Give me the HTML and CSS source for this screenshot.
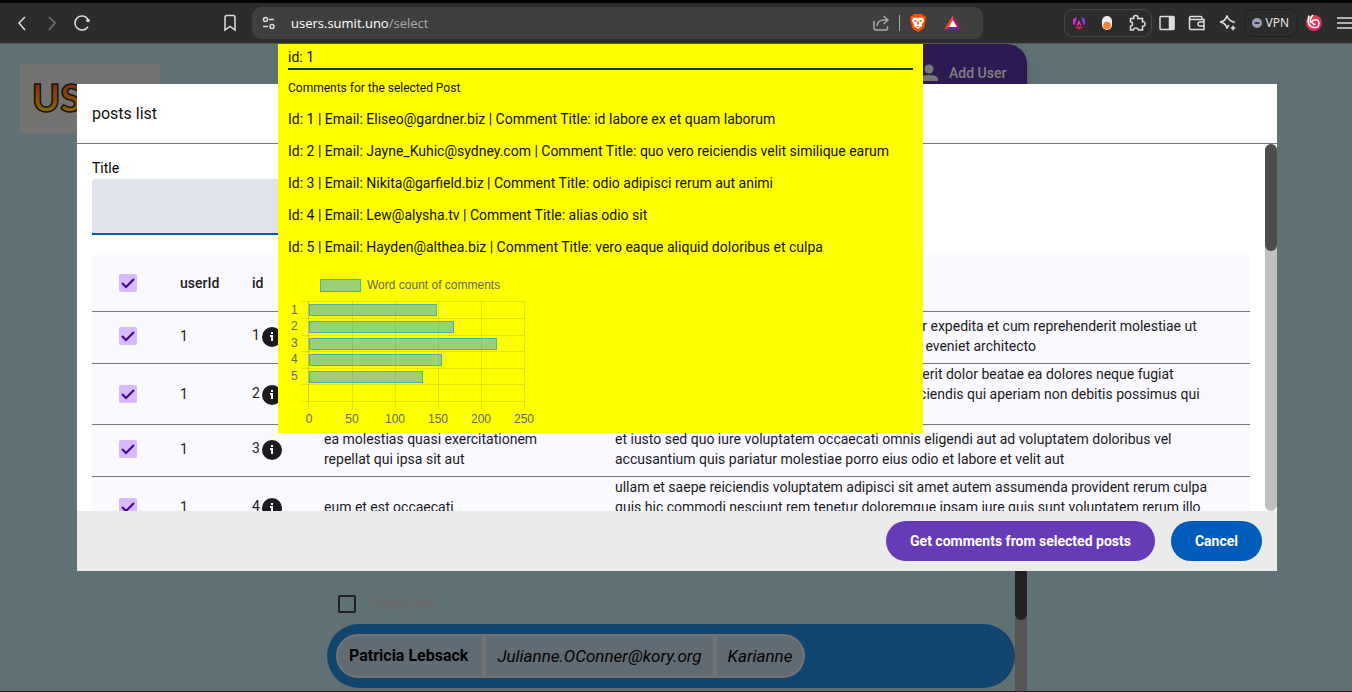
FILE: index.html
```
<!DOCTYPE html>
<html lang="en">
<head>
<meta charset="utf-8">
<title>Users</title>
<link rel="stylesheet" href="styles.css">
</head>
<body>
<header class="toolbar">
  <nav class="nav-buttons">
    <button class="tool" aria-label="Back"><svg width="18" height="18" viewBox="0 0 18 18"><path d="M12 3 6 9l6 7"/></svg></button>
    <button class="tool tool-dim" aria-label="Forward"><svg width="18" height="18" viewBox="0 0 18 18"><path d="m6 3 6 6-6 7"/></svg></button>
    <button class="tool" aria-label="Reload"><svg width="18" height="18" viewBox="0 0 18 18"><path d="M15 12.500A7 7 0 1 1 15 5.500"/><circle cx="15" cy="6.500" r="1.800" fill="#ddd" stroke="none"/></svg></button>
  </nav>
  <button class="tool bookmark" aria-label="Bookmark"><svg width="18" height="18" viewBox="0 0 18 18"><path d="M4 3.500Q4 1.500 6 1.500h6q2 0 2 2v12.500l-5-3.500-5 3.500z"/></svg></button>
  <div class="address">
    <svg class="icon" width="14" height="14" viewBox="0 0 14 14"><circle cx="3.500" cy="3.500" r="2"/><path d="M7 3.500h5M1 10.500h5"/><circle cx="10" cy="10.500" r="2"/></svg>
    <span class="url">users.sumit.uno<span class="url-path">/select</span></span>
    <button class="tool share" aria-label="Share"><svg width="18" height="18" viewBox="0 0 18 18"><path d="M2 7v7q0 2 2 2h10q1.500 0 1.500-1.500V12M5 12q.500-6 7-6h4M11.500 2l4.500 4-4.500 4"/></svg></button>
    <span class="separator"></span>
    <svg width="18" height="20" viewBox="0 0 18 20"><path fill="#ff5000" d="M5 1h8l1.500 1.500L17 4l-.5 3L15 15l-6 4-6-4L1.500 7 1 4l2.500-1.500z"/><path fill="#fff" d="m4 5 3-.500 2 .500 2-.500 3 .500 1 3-2 3v2l-4 3-4-3v-2L3 8z"/><path fill="#ff5000" d="m5 7 2.500.500v1L6 9zM13 7l-2.500.500v1L12 9zM8.500 8h1l.5 3-1 1-1-1zM7 13h4l-2 1z"/></svg>
    <svg class="rewards" width="18" height="18" viewBox="0 0 18 18"><path fill="#ff4724" d="M9 1v6l-4 7-5 2z"/><path fill="#9e1f63" d="M9 1v6l4 7 5 2z"/><path fill="#662d91" d="m0 16 5-3h8l5 3z"/><path fill="#fff" d="m9 6 4 7H5z"/></svg>
  </div>
  <div class="extensions">
    <svg width="14" height="14" viewBox="0 0 14 14"><path fill="#d52fd0" d="M1 3 5 1 2.500 9.500 1 8z"/><path fill="#8a35f2" d="M9 1l4 2v5l-1.500 1.500z"/><path fill="#e83bc8" d="m7 4 2.500 5.500H8.200L7.800 8.500H6.200l-.4 1H4.500z"/><path fill="#f01456" d="M4 10.500h6l.5 1L7 13.500l-3.500-2z"/></svg>
    <svg width="10" height="14" viewBox="0 0 10 14"><rect width="10" height="14" rx="5" fill="#eee"/><circle cx="5" cy="9.500" r="3.800" fill="#f58233"/></svg>
    <svg class="icon" width="18" height="18" viewBox="0 0 18 18"><path d="M2.500 4.500h3.300Q5 1.500 7.800 1.500T9.800 4.500h4.700v3.300q2.500-.3 2.500 2.200t-2.500 2.200V16h-4.200q-.3-2-2.500-2T5.500 16h-3v-3.800q2-.2 2-2.200t-2-2.200z"/></svg>
  </div>
  <button class="tool" aria-label="Side panel"><svg width="16" height="16" viewBox="0 0 16 16"><rect x="1" y="1.500" width="14" height="13" rx="1"/><path fill="#ddd" d="M10.500 2h4v12h-4z"/></svg></button>
  <button class="tool" aria-label="Wallet"><svg width="18" height="16" viewBox="0 0 18 16"><path d="M14 4.500V3q0-1.500-1.500-1.500H3Q1.500 1.500 1.500 3v10q0 1.500 1.500 1.500h13V4.500H2M16 7h-4q-2 0-2 2t2 2h4"/></svg></button>
  <button class="tool" aria-label="Assistant"><svg width="18" height="18" viewBox="0 0 18 18"><path d="M14.500 9Q15 8.500 15 8q-5.500-1-7-6.500Q7 7 1 8q6 1 7 6.500 .5-2 2-3.500"/><path d="M14 11q.5 2.500 3 3-2.500.500-3 3-.5-2.500-3-3 2.500-.500 3-3z" fill="#ddd" stroke="none"/></svg></button>
  <button class="vpn"><span class="vpn-dot"></span>VPN</button>
  <svg width="18" height="18" viewBox="0 0 18 18"><defs><linearGradient id="swirl" x2="1" y2="1"><stop stop-color="#f04b3c"/><stop offset="1" stop-color="#d51c78"/></linearGradient></defs><circle cx="9" cy="9" r="8" fill="url(#swirl)"/><path d="M4 1.500Q1 12 9 13.500q5 .5 5-4T9.500 6 8 9.500q1 1.500 2.500.500M8 1Q4 5 6 9" fill="none" stroke="#fff" stroke-width="1.500"/></svg>
  <button class="tool menu" aria-label="Menu"><svg width="16" height="14" viewBox="0 0 16 14"><path d="M1 2h15M1 7h15M1 12h15"/></svg></button>
</header>

<main class="page">
  <div class="app">
    <div class="logo">
      <svg width="140" height="69" viewBox="0 0 140 69"><defs><linearGradient id="flame" x2="0" y2="1"><stop offset=".2" stop-color="#862d0a"/><stop offset=".8" stop-color="#8a6409"/></linearGradient></defs><text x="12" y="48" class="logo-text">US</text></svg>
    </div>
    <section class="column">
      <button class="add-user"><svg width="22" height="22" viewBox="0 0 22 22"><circle cx="11" cy="7" r="4.500"/><path d="M2 19v-2q0-4 9-4t9 4v2z"/></svg>Add User</button>
      <div class="user-list">
        <label class="check-me"><input type="checkbox" class="plain-box">Check me!</label>
        <div class="user-pill">
          <div class="chips"><strong>Patricia Lebsack</strong><em>Julianne.OConner@kory.org</em><em>Karianne</em></div>
        </div>
      </div>
      <div class="page-scroll"><div class="page-thumb"></div></div>
    </section>
    <div class="taskbar"></div>
  </div>

  <div class="overlay">
    <section class="dialog" role="dialog" aria-labelledby="dialog-title">
      <h1 class="dialog-title" id="dialog-title">posts list</h1>
      <div class="dialog-body">
        <div class="content">
          <label class="field-label" for="title">Title</label>
          <input class="field" id="title" type="text">
          <table class="posts">
            <colgroup><col class="c-narrow"><col class="c-narrow"><col class="c-narrow"><col class="c-title"><col></colgroup>
            <thead><tr><th class="pick"><input type="checkbox" checked aria-label="Select all"></th><th>userId</th><th>id</th><th>title</th><th></th></tr></thead>
            <tbody>
              <tr class="short"><td class="pick"><input type="checkbox" checked aria-label="Select post 1"></td><td>1</td><td><span class="id-cell">1<svg class="info" width="20" height="20" viewBox="0 0 20 20"><circle cx="10" cy="10" r="10"/><path d="M9 5h2v2H9zM8 8h3v6H9v-4H8z"/></svg></span></td><td>sunt aut facere repellat</td><td>quia et suscipit suscipit recusandae consequuntur expedita et cum reprehenderit molestiae ut<br>ut quas totam nostrum rerum est autem sunt rem eveniet architecto</td></tr>
              <tr><td class="pick"><input type="checkbox" checked aria-label="Select post 2"></td><td>1</td><td><span class="id-cell">2<svg class="info" width="20" height="20" viewBox="0 0 20 20"><circle cx="10" cy="10" r="10"/><path d="M9 5h2v2H9zM8 8h3v6H9v-4H8z"/></svg></span></td><td>qui est esse</td><td>est rerum tempore vitae sequi sint nihil reprehenderit dolor beatae ea dolores neque fugiat<br>blanditiis voluptate porro vel nihil molestiae ut reiciendis qui aperiam non debitis possimus qui<br>neque nisi nulla</td></tr>
              <tr class="short"><td class="pick"><input type="checkbox" checked aria-label="Select post 3"></td><td>1</td><td><span class="id-cell">3<svg class="info" width="20" height="20" viewBox="0 0 20 20"><circle cx="10" cy="10" r="10"/><path d="M9 5h2v2H9zM8 8h3v6H9v-4H8z"/></svg></span></td><td>ea molestias quasi exercitationem<br>repellat qui ipsa sit aut</td><td>et iusto sed quo iure voluptatem occaecati omnis eligendi aut ad voluptatem doloribus vel<br>accusantium quis pariatur molestiae porro eius odio et labore et velit aut</td></tr>
              <tr><td class="pick"><input type="checkbox" checked aria-label="Select post 4"></td><td>1</td><td><span class="id-cell">4<svg class="info" width="20" height="20" viewBox="0 0 20 20"><circle cx="10" cy="10" r="10"/><path d="M9 5h2v2H9zM8 8h3v6H9v-4H8z"/></svg></span></td><td>eum et est occaecati</td><td>ullam et saepe reiciendis voluptatem adipisci sit amet autem assumenda provident rerum culpa<br>quis hic commodi nesciunt rem tenetur doloremque ipsam iure quis sunt voluptatem rerum illo<br>velit</td></tr>
            </tbody>
          </table>
        </div>
        <div class="scroll"><div class="thumb"></div></div>
      </div>
      <footer class="actions"><button class="action">Get comments from selected posts</button><button class="action cancel">Cancel</button></footer>
    </section>
  </div>

  <aside class="tooltip">
    <h2 class="tip-id">id: 1</h2>
    <p class="tip-caption">Comments for the selected Post</p>
    <p class="comment">Id: 1 | Email: Eliseo@gardner.biz | Comment Title: id labore ex et quam laborum</p>
    <p class="comment">Id: 2 | Email: Jayne_Kuhic@sydney.com | Comment Title: quo vero reiciendis velit similique earum</p>
    <p class="comment">Id: 3 | Email: Nikita@garfield.biz | Comment Title: odio adipisci rerum aut animi</p>
    <p class="comment">Id: 4 | Email: Lew@alysha.tv | Comment Title: alias odio sit</p>
    <p class="comment">Id: 5 | Email: Hayden@althea.biz | Comment Title: vero eaque aliquid doloribus et culpa</p>
    <svg class="chart" width="260" height="160" viewBox="0 0 260 160">
      <rect class="bar" x="32.500" y="9.500" width="40" height="12"/>
      <text x="79" y="19">Word count of comments</text>
      <g class="grid">
        <path d="M13 31.500h224M13 48.500h224M13 65.500h224M13 81.500h224M13 98.500h224M13 114.500h224M13 131.500h224"/>
        <path d="M20.500 31v108M64.500 31v108M107.500 31v108M150.500 31v108M193.500 31v108M236.500 31v108"/>
        <path d="M20.500 31v101"/>
      </g>
      <rect class="bar" x="21.500" y="34.500" width="127" height="11"/>
      <rect class="bar" x="21.500" y="51.500" width="144" height="11"/>
      <rect class="bar" x="21.500" y="68.500" width="187" height="11"/>
      <rect class="bar" x="21.500" y="84.500" width="132" height="11"/>
      <rect class="bar" x="21.500" y="101.500" width="113" height="11"/>
      <g><text x="3" y="44">1</text><text x="3" y="60">2</text><text x="3" y="77">3</text><text x="3" y="93">4</text><text x="3" y="110">5</text></g>
      <g text-anchor="middle"><text x="21" y="153">0</text><text x="64" y="153">50</text><text x="107" y="153">100</text><text x="150" y="153">150</text><text x="193" y="153">200</text><text x="236" y="153">250</text></g>
    </svg>
  </aside>
</main>
</body>
</html>
```
FILE: styles.css
```
* { box-sizing: border-box; }
html, body { height: 100%; }
body {
  margin: 0;
  display: flex;
  flex-direction: column;
  overflow: hidden;
  font: 14px/20px Roboto, sans-serif;
  color: #1b1b1f;
}
button { border: 0; margin: 0; padding: 0; background: none; font: inherit; color: inherit; cursor: pointer; }
h1, h2, p { margin: 0; font-weight: 400; }
svg { display: block; flex: none; }

/* browser toolbar */
.toolbar {
  display: flex;
  align-items: center;
  gap: 13px;
  height: 44px;
  flex: none;
  padding-left: 13px;
  overflow: hidden;
  background: #2c2c2c;
  border-top: 3px solid #000;
  border-bottom: 1px solid #555;
  font-family: "Open Sans", sans-serif;
  font-size: 13px;
}
.nav-buttons { display: flex; gap: 12px; }
.tool svg, .icon { fill: none; stroke: #ddd; stroke-width: 1.5; }
.tool-dim svg { stroke: #777; }
.bookmark { margin-left: 117px; }
.address {
  display: flex;
  align-items: center;
  gap: 9px;
  flex: 1;
  height: 32px;
  padding: 0 21px 0 10px;
  border-radius: 9px;
  background: #3f3f3f;
}
.url { flex: 1; margin-left: 6px; color: #fff; }
.url-path { color: #aaa; }
.share svg { stroke: #aaa; }
.separator { width: 1px; height: 16px; background: #aaa; }
.rewards { margin-left: 8px; }
.extensions {
  display: flex;
  align-items: center;
  justify-content: space-between;
  width: 88px;
  height: 28px;
  margin: 0 -6px 0 68px;
  padding: 0 5px 0 7px;
  border: 1px solid #474747;
  border-radius: 9px;
}
.vpn {
  display: flex;
  align-items: center;
  gap: 4px;
  height: 28px;
  margin: 0 -6px;
  padding: 0 8px 0 7px;
  border: 1px solid #202020;
  border-radius: 9px;
  font-size: 12px;
  color: #eee;
}
.vpn-dot { width: 10px; height: 10px; border: 4px solid #9aa0b5; border-width: 4px 2px; border-radius: 5px; background: #333; }

/* dimmed application */
.page { position: relative; flex: 1; overflow: hidden; background: #607175; }
.app { display: flex; flex-direction: column; position: relative; height: 100%; }
.logo { position: absolute; left: 20px; top: 20px; background: #757272; }
.logo-text { font: 900 38px Lato, sans-serif; fill: url(#flame); stroke: #171310; stroke-width: 1.5; }
.column {
  display: grid;
  grid-template-columns: 1fr 12px;
  grid-template-rows: 60px 1fr;
  flex: 1;
  margin: 0 325px 0 327px;
}
.add-user {
  grid-column: 1 / 3;
  justify-self: end;
  display: flex;
  align-items: center;
  gap: 9px;
  width: 139px;
  height: 57px;
  padding-left: 30px;
  border-radius: 0 20px 0 0;
  background: #2e1a52;
  box-shadow: 0 3px 6px #0004;
  color: #808080;
  font-weight: 500;
}
.add-user svg { fill: #777; }
.user-list { display: flex; flex-direction: column; justify-content: flex-end; gap: 10px; padding-bottom: 3px; }
.check-me { display: flex; align-items: center; gap: 14px; padding-left: 11px; color: #71696b; font-weight: 500; }
.plain-box { appearance: none; width: 18px; height: 18px; margin: 0; border: 2px solid #1e2022; border-radius: 2px; }
.user-pill { padding: 10px 9px; border-radius: 32px; background: #11456e; }
.chips {
  display: flex;
  width: fit-content;
  height: 44px;
  border: 2px solid #737373;
  border-radius: 22px;
  background: #616b74;
  color: #030303;
  font-size: 16px;
  line-height: 40px;
}
.chips > * { padding: 0 11px; }
.chips strong { padding-right: 14px; }
.chips em { font-size: 17px; }
.chips > * + * { border-left: 4px solid #737373; }
.page-scroll { background: #555; }
.page-thumb { height: 516px; border-radius: 6px; background: #222; }
.taskbar { height: 1px; background: #202529; }

/* dialog */
.overlay { position: absolute; inset: 0; display: flex; padding: 40px 75px 121px 77px; }
.dialog { display: flex; flex-direction: column; flex: 1; min-width: 0; background: #fff; }
.dialog-title { padding: 20px 15px 19px; border-bottom: 1px solid #77767c; font-size: 16px; line-height: 20px; color: #111; }
.dialog-body { display: flex; flex: 1; min-height: 0; overflow: hidden; }
.content { flex: 1; min-width: 0; padding: 14px 15px; }
.field-label { display: block; line-height: 21px; color: #000; }
.field {
  display: block;
  width: 100%;
  max-width: 360px;
  height: 56px;
  padding: 0 16px;
  border: 0;
  border-bottom: 2px solid #005cbb;
  border-radius: 4px 4px 0 0;
  background: #e0e2ec;
  font: inherit;
}
.posts { width: 100%; margin-top: 20px; border-spacing: 0; table-layout: fixed; background: #faf9fd; }
.c-narrow { width: 72px; }
.c-title { width: 291px; }
.posts th { height: 57px; text-align: left; font-weight: 500; }
.posts td { height: 52px; }
.posts th, .posts td { padding: 0 0 0 16px; border-bottom: 1px solid #77767c; white-space: nowrap; }
.posts .short td { padding-bottom: 3px; }
.posts .pick { padding-left: 27px; }
.pick input {
  appearance: none;
  display: block;
  width: 18px;
  height: 18px;
  margin: 0;
  border-radius: 2px;
  background: #d7baff url("data:image/svg+xml,%3Csvg xmlns='http://www.w3.org/2000/svg' viewBox='0 0 18 18'%3E%3Cpath d='m3 9 4 4 8-8' fill='none' stroke='%23420089' stroke-width='2'/%3E%3C/svg%3E");
}
.id-cell { display: flex; gap: 2px; }
.info { margin-top: 2px; }
.info circle { fill: #1b1b1f; }
.info path { fill: #fff; }
.scroll { width: 12px; border-radius: 6px; background: #c0c0c0; }
.thumb { height: 107px; border-radius: 6px; background: #4d4d4d; }
.actions { display: flex; justify-content: flex-end; gap: 16px; padding: 10px 15px; background: #ebebeb; }
.action { height: 40px; padding: 0 24px; border-radius: 20px; background: #673ab7; color: #fff; font-weight: 700; }
.cancel { background: #005cbb; }

/* comment tooltip */
.tooltip { position: absolute; left: 278px; right: 429px; top: 0; padding: 3px 10px; background: #ff0; color: #111; white-space: nowrap; }
.tip-id { height: 23px; border-bottom: 2px solid #0b3552; font-size: 14px; line-height: 20px; }
.tip-caption { padding: 8px 0 5px; font-size: 12px; }
.comment { line-height: 32px; }
.chart { margin-top: 7px; }
.chart text { font: 12px "Liberation Sans", Arial, sans-serif; fill: #666; }
.grid { fill: none; stroke: #0000001a; }
.bar { fill: #36a2eb80; stroke: #4bafb8; }
```
